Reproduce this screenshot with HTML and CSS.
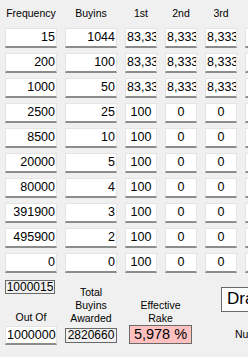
FILE: index.html
```html
<!DOCTYPE html>
<html>
<head>
<meta charset="utf-8">
<link rel="stylesheet" href="styles.css">
</head>
<body>
<div class="page">
  <div class="grid">
    <div class="hd">Frequency</div>
    <div class="hd">Buyins</div>
    <div class="hd">1st</div>
    <div class="hd">2nd</div>
    <div class="hd">3rd</div>
    <div class="hd"></div>

    <div class="tb r">15</div><div class="tb r">1044</div><div class="tb l">83,333</div><div class="tb c">8,333</div><div class="tb c">8,333</div><div class="tb"></div>
    <div class="tb r">200</div><div class="tb r">100</div><div class="tb l">83,333</div><div class="tb c">8,333</div><div class="tb c">8,333</div><div class="tb"></div>
    <div class="tb r">1000</div><div class="tb r">50</div><div class="tb l">83,333</div><div class="tb c">8,333</div><div class="tb c">8,333</div><div class="tb"></div>
    <div class="tb r">2500</div><div class="tb r">25</div><div class="tb c">100</div><div class="tb c">0</div><div class="tb c">0</div><div class="tb"></div>
    <div class="tb r">8500</div><div class="tb r">10</div><div class="tb c">100</div><div class="tb c">0</div><div class="tb c">0</div><div class="tb"></div>
    <div class="tb r">20000</div><div class="tb r">5</div><div class="tb c">100</div><div class="tb c">0</div><div class="tb c">0</div><div class="tb"></div>
    <div class="tb r">80000</div><div class="tb r">4</div><div class="tb c">100</div><div class="tb c">0</div><div class="tb c">0</div><div class="tb"></div>
    <div class="tb r">391900</div><div class="tb r">3</div><div class="tb c">100</div><div class="tb c">0</div><div class="tb c">0</div><div class="tb"></div>
    <div class="tb r">495900</div><div class="tb r">2</div><div class="tb c">100</div><div class="tb c">0</div><div class="tb c">0</div><div class="tb"></div>
    <div class="tb r">0</div><div class="tb r">0</div><div class="tb c">100</div><div class="tb c">0</div><div class="tb c">0</div><div class="tb"></div>
  </div>

  <div class="footer">
    <div class="col col-a">
      <div class="box box-sum">1000015</div>
      <div class="lbl lbl-outof">Out Of</div>
      <div class="tb c tb-out">1000000</div>
    </div>
    <div class="col col-b">
      <div class="lbl lbl-total">Total<br>Buyins<br>Awarded</div>
      <div class="box box-total">2820660</div>
    </div>
    <div class="col col-c">
      <div class="lbl lbl-rake">Effective<br>Rake</div>
      <div class="box box-rake">5,978 %</div>
    </div>
    <div class="col col-d">
      <div class="btn">Draw</div>
      <div class="lbl lbl-nu">Number</div>
    </div>
  </div>
</div>
</body>
</html>
```

FILE: styles.css
```css
html, body {
  margin: 0;
  padding: 0;
  background: #f0f0f0;
  overflow: hidden;
}

body {
  width: 248px;
  height: 357px;
  font-family: "Liberation Sans", Arial, sans-serif;
  color: #000;
}

.page {
  width: 248px;
  height: 357px;
  overflow: hidden;
}

.grid {
  display: grid;
  grid-template-columns: 52px 52px 32px 32px 32px 32px;
  grid-template-rows: 23px repeat(10, 20px);
  column-gap: 8px;
  row-gap: 5px;
  padding-left: 5px;
  width: 300px;
}

.hd {
  font-size: 10.5px;
  line-height: 13px;
  padding-top: 7px;
  text-align: center;
  white-space: nowrap;
}

.tb {
  box-sizing: border-box;
  height: 20px;
  background: #fff;
  border: 1px solid #e4e4e4;
  border-bottom: 2px solid #8c8c8c;
  font-family: "Liberation Sans Narrow", "Liberation Sans", Arial, sans-serif;
  font-size: 12.5px;
  line-height: 14px;
  padding: 1px 1px 0 1px;
  white-space: nowrap;
  overflow: hidden;
}

.tb.r { text-align: right; }
.tb.c { text-align: center; }
.tb.l { text-align: left; }

.footer {
  display: flex;
  align-items: flex-start;
  padding-left: 5px;
  width: 300px;
}

.col {
  display: flex;
  flex-direction: column;
  align-items: center;
}

.col-a { width: 52px; align-items: flex-start; }
.col-b { width: 52px; margin-left: 8px; }
.col-c { width: 63px; margin-left: 12px; }
.col-d { width: 40px; margin-left: 29px; align-items: flex-start; }

.lbl {
  font-size: 10.5px;
  line-height: 13px;
  text-align: center;
  white-space: nowrap;
}

.box {
  box-sizing: border-box;
  border: 1px solid #6a6a6a;
  text-align: center;
  white-space: nowrap;
  overflow: hidden;
}

.box-sum {
  margin-top: 7px;
  width: 50px;
  height: 14px;
  font-family: "Liberation Sans Narrow", "Liberation Sans", Arial, sans-serif;
  font-size: 12px;
  line-height: 12px;
}

.lbl-outof {
  margin-top: 17px;
  width: 52px;
}

.tb-out {
  margin-top: 2px;
  width: 52px;
  height: 19px;
}

.lbl-total {
  margin-top: 13px;
}

.box-total {
  margin-top: 3px;
  width: 52px;
  height: 15px;
  font-family: "Liberation Sans Narrow", "Liberation Sans", Arial, sans-serif;
  font-size: 12px;
  line-height: 13px;
}

.lbl-rake {
  margin-top: 26px;
}

.box-rake {
  width: 63px;
  height: 19px;
  background: #ffc0c0;
  font-size: 14.5px;
  line-height: 17px;
}

.btn {
  box-sizing: border-box;
  margin-top: 14px;
  width: 60px;
  height: 25px;
  background: #fdfdfd;
  border: 1px solid #6a6a6a;
  font-size: 17px;
  line-height: 22px;
  padding-left: 5px;
  white-space: nowrap;
}

.lbl-nu {
  margin-top: 16px;
  margin-left: 14px;
  text-align: left;
}
```
